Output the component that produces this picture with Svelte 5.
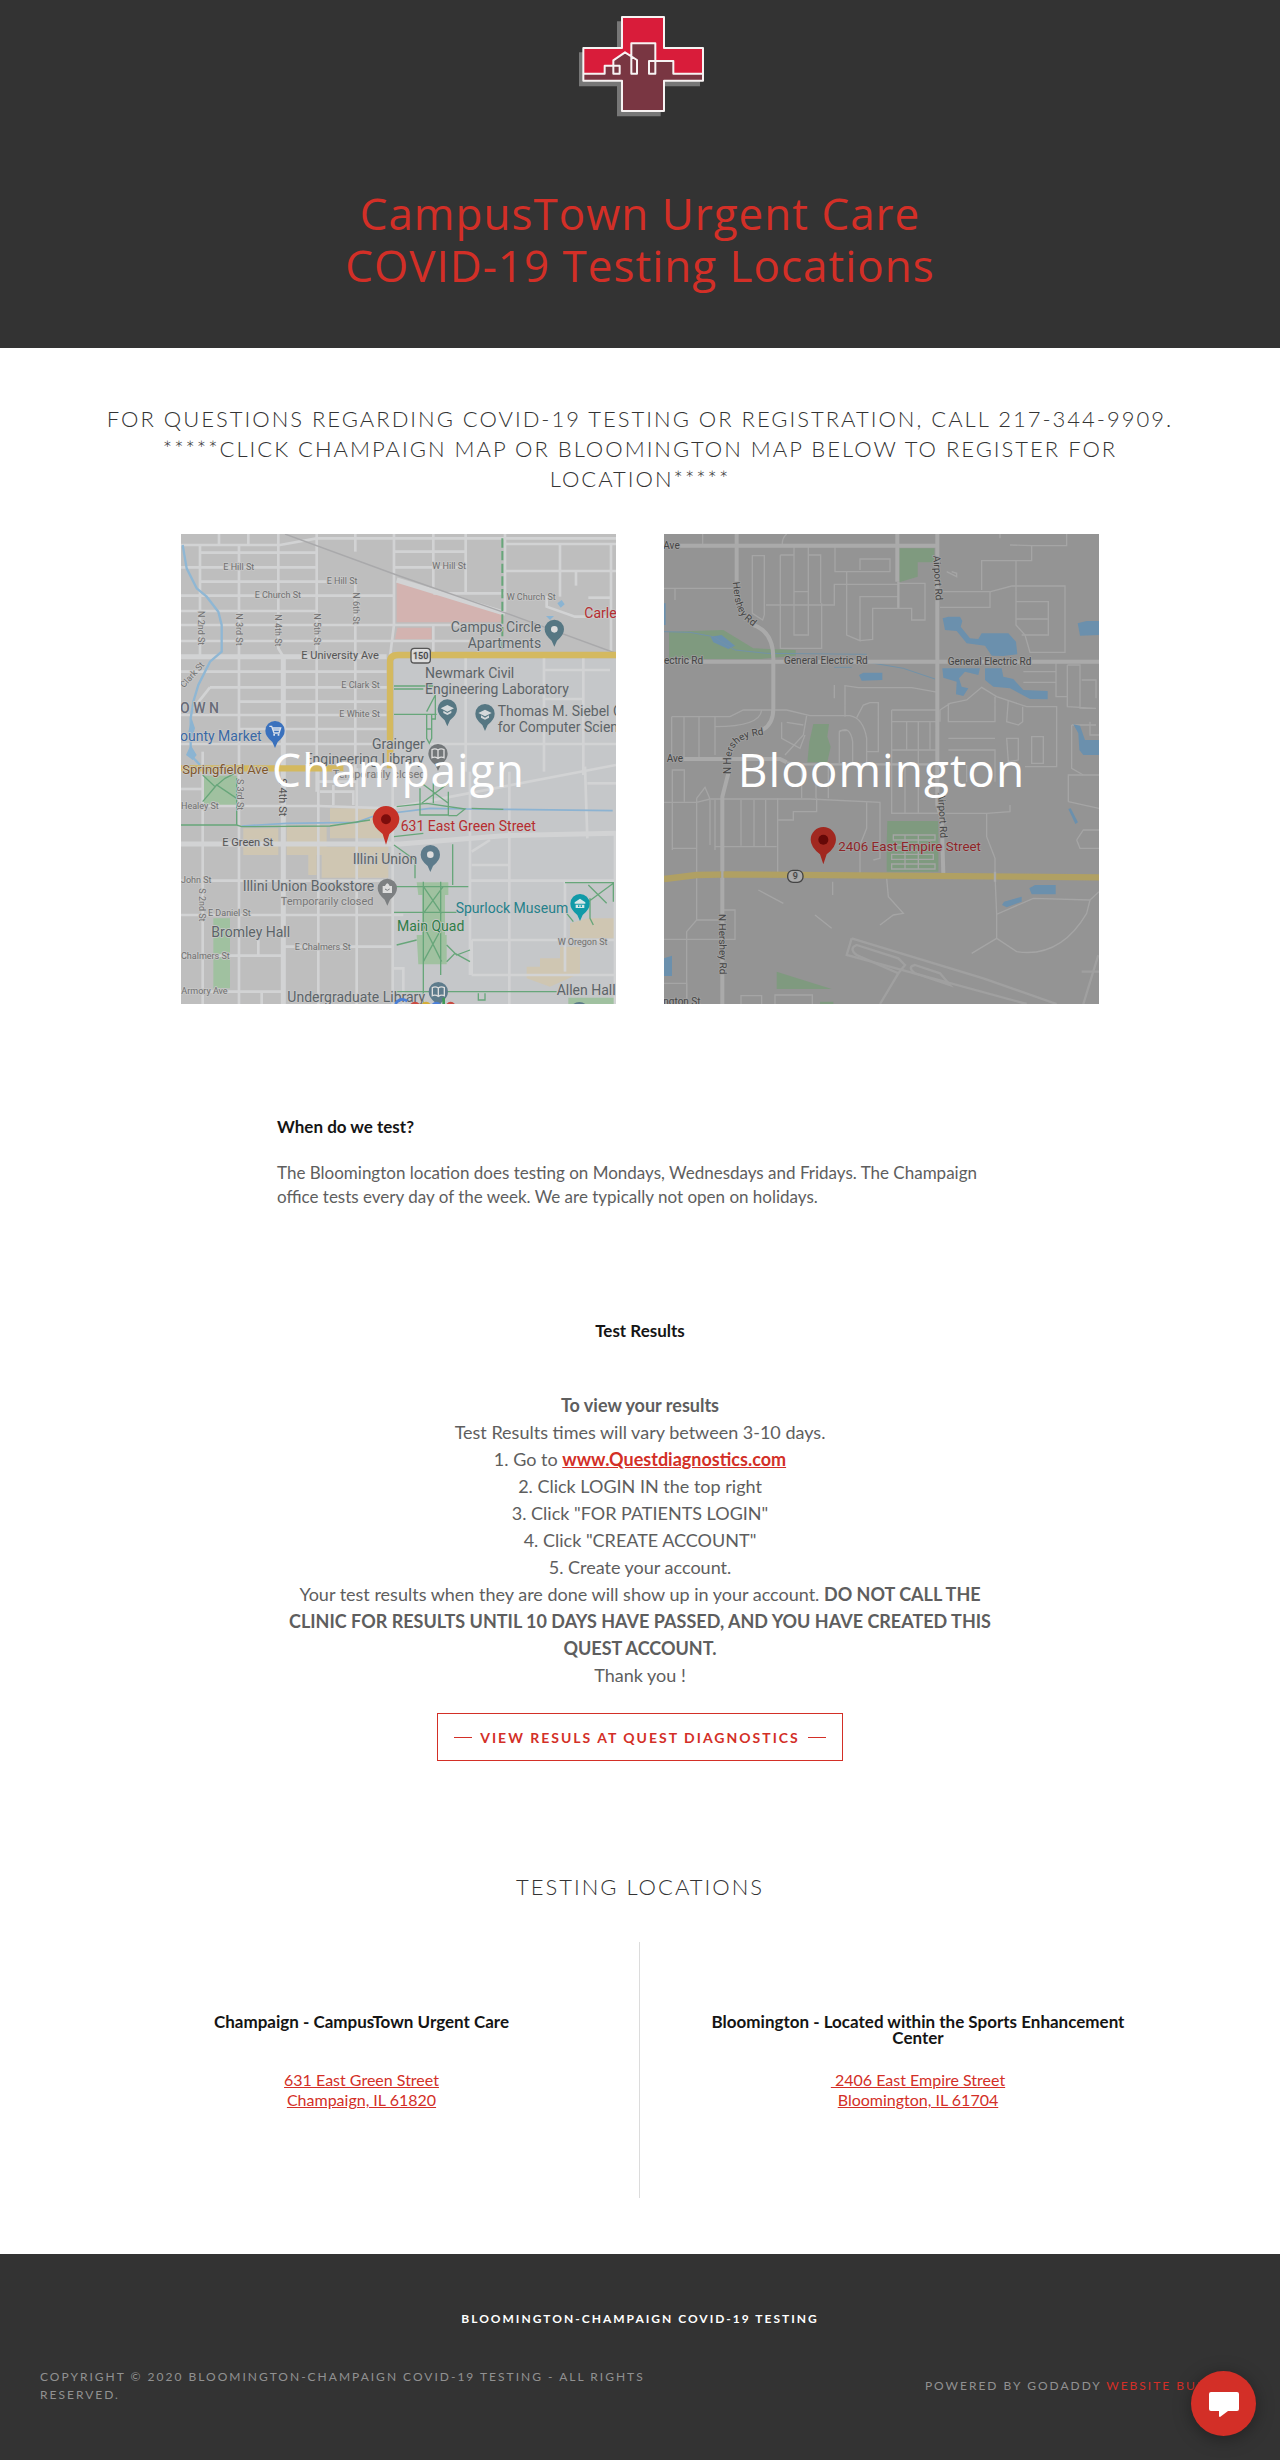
<script>
  const champaignRoads = [
    'M33 60H330L440 40H1338', 'M90 83H440', 'M672 80H887', 'M33 127H440', 'M672 127H887', 'M90 170H470', 'M33 212H672',
    'M790 205H1005', 'M33 258H440', 'M33 300H900', 'M33 348H900', 'M33 440H650', 'M120 487H650L660 487',
    'M70 550L120 487', 'M205 530H650', 'M33 570H650', 'M205 612H650', 'M33 657H650', 'M780 657H1338', 'M1122 435H1320',
    'M1122 522H1240', 'M1005 57H1338', 'M1005 138H1338', 'M1255 218H1323', 'M1130 212V245L1215 275H1323', 'M1218 140V182',
    'M90 60V400', 'M147 27V60', 'M235 27V60', 'M207 60V1437', 'M325 27V370L340 395', 'M440 27V800', 'M556 27V80', 'M556 160V760',
    'M672 27V300L660 395', 'M790 27V190', 'M790 300V390', 'M887 27V205', 'M1005 27V260', 'M1170 57V215', 'M1323 57V395',
    'M887 395V740', 'M1122 395V740', 'M1240 395V750', 'M33 792H98', 'M33 843H445L660 850L1338 720', 'M445 770H560', 'M450 800H550V840',
    'M490 780V840', 'M98 680V1437', 'M445 730V1437', 'M560 730V1437', 'M668 730V1437', 'M900 740V1350', 'M1018 740V1437',
    'M1245 725L1252 940', 'M1335 925V1437', 'M33 1067H668', 'M900 1067H1338', 'M33 1170H700', 'M340 1265H668', 'M33 1292H340',
    'M905 1245H1335', 'M905 1350H1338', 'M33 1400H340', 'M1185 1070V1340', 'M265 1240V1292', 'M275 1400V1437', 'M905 1020H1018',
    'M905 980L960 945', 'M1252 775H1338', 'M668 1330H700V1437', 'M905 1245V1350'
  ];
  const champaignWide = ['M33 395H650', 'M340 395V1437', 'M33 957H690L1000 932L1338 925', 'M680 165L1005 265'];
  const campusGreen = [
    'M672 483H790M672 492H760M672 568H800M770 560L796 510V582H785M770 570V640L778 655L785 640V570M770 612H785',
    'M33 900H200L215 905L480 903L600 885M200 760V900', 'M98 750L135 785L165 760L205 740M98 830L140 780L200 820',
    'M755 775L835 835M835 775L755 835M790 775V835M750 790V870H835V800',
    'M680 845L770 835L885 852L860 872H835M905 850L1000 853M672 935L760 925M672 960L735 1005V1060M848 958V1080',
    'M760 1084L815 1165M820 1084L760 1165M760 1200L815 1310M820 1200L760 1310M672 1085H895M672 1162H860M760 1070V1437M812 1070V1350',
    'M680 1260L740 1245M830 1310L855 1285L900 1310M830 1260L860 1290L900 1275', 'M672 1400H1160M925 1405V1425H945V1405',
    'M1185 1073H1330V1130M1255 1130L1330 1075M1255 1080L1310 1135M1260 1120V1180L1270 1200M1190 1165L1210 1190'
  ];
  const champaignLabels = [
    [160, 136, 'E Hill St'], [470, 178, 'E Hill St'], [787, 132, 'W Hill St'], [254, 220, 'E Church St'], [1010, 226, 'W Church St'],
    [514, 490, 'E Clark St'], [508, 577, 'E White St'], [33, 852, 'Healey St'], [33, 1074, 'John St'], [114, 1174, 'E Daniel St'],
    [374, 1275, 'E Chalmers St'], [33, 1301, 'Chalmers St'], [34, 1408, 'Armory Ave'], [1163, 1260, 'W Oregon St']
  ];
  const champaignVertical = [
    [83, 258, 'N 2nd St'], [199, 265, 'N 3rd St'], [316, 268, 'N 4th St'], [432, 265, 'N 5th St'], [548, 202, 'N 6th St'],
    [201, 762, 'S 3rd St'], [86, 1090, 'S 2nd St']
  ];
  const champaignPlaces = [
    [842, 320, 'Campus Circle'], [893, 368, 'Apartments'], [765, 459, 'Newmark Civil'], [765, 508, 'Engineering Laboratory'],
    [983, 573, 'Thomas M. Siebel C'], [983, 621, 'for Computer Scien'], [606, 672, 'Grainger'], [404, 718, 'Engineering Library'],
    [548, 1018, 'Illini Union'], [218, 1098, 'Illini Union Bookstore'], [124, 1235, 'Bromley Hall'], [352, 1431, 'Undergraduate Library'],
    [1160, 1411, 'Allen Hall']
  ];
  const pins = [
    [1153, 313, '#567783', 'dot'], [832, 552, '#567783', 'cap'], [945, 566, '#567783', 'cap'], [315, 617, '#3a71bd', 'cart'],
    [804, 686, '#737779', 'book'], [781, 989, '#5d7b8b', 'dot'], [652, 1090, '#7d8082', 'bag'], [1230, 1136, '#119aa8', 'museum'],
    [805, 1400, '#5d7b8b', 'book'], [1228, 1460, '#5d7b8b', 'dot']
  ];
  const bloomRoads = [
    'M42 190H258', 'M75 190V225', 'M158 27V58', 'M397 62Q395 40 410 27', 'M307 92H343V270L338 285L307 265Z', 'M432 62V330H475V65',
    'M391 90H432M475 90H512V235M391 90V370H515V235', 'M348 240H553V178H745M432 200H475', 'M555 65V140H720V102H630V135',
    'M590 140V330L630 347V215H745V248M630 347L668 343V250H785V285H825V175H745', 'M870 200H1022L1085 183H1245V382H1140L1125 330L1098 300V105',
    'M870 247H1020V200M995 195V107H1145V62M1050 40V27M1080 60L1145 62H1250V27M1098 230H1195V330H1115M1098 282H1195M890 140L920 155V145L905 140',
    'M65 575H240L280 555H410L480 572H600Q640 580 650 640V720M65 575V700M102 575V700M147 575V700M195 575V690',
    'M195 605Q330 605 335 555M470 572L460 630L405 690M410 592L460 600M395 592V640L450 670L465 630',
    'M585 575V482L625 488H785L865 502M553 480V520M620 578L640 540L660 533H685V680H650',
    'M725 555H865V865H725V555M725 590H865M770 590V675M805 590V865M840 590V675M725 675H865M765 715V865',
    'M870 590V555L900 535L950 525L995 487L1040 515L1130 545H1220V725H1125M895 535V590H1035V515M895 640H1035M895 675H1035V770M950 720V770',
    'M1075 525L1070 590L1105 600L1118 590V545M1070 640H1105V705L1075 710ZM1145 635H1180V715H1145ZM1218 410V515H1252M1120 440H1218M1120 472H1218',
    'M1252 420H1290V550H1338M1252 420V545L1338 550M1295 465H1338V520M1265 600V730L1300 750M1265 600H1338M1320 590V630H1347',
    'M568 715V620Q600 600 608 650V715M568 617H590M455 715V820M535 720V820M498 745V820',
    'M42 832H140L180 822H480L690 832V1000L670 1005M140 820L165 787L180 822M140 820V1185L110 1220V1437',
    'M67 975V735H103V830M67 970H140M180 825V960M195 825V975M273 825V962M312 825V965M347 825V965M195 965H380M383 1045V820M383 885H430V860H500V820M650 832V910L630 960V1045',
    'M725 865H1010V935L1035 1000V1045M1010 865L1080 860V840M42 1243H255V1155H220M140 1185H215M42 1375H110V1437',
    'M1035 1050L1040 1168L1150 1120L1320 1125L1347 1100M1040 1168V1240L1100 1280Q1230 1300 1310 1165L1320 1125M1040 1240L965 1285',
    'M1255 830L1347 850M1255 830V750H1347M1280 945L1300 915H1347M1280 945L1290 970H1347M710 1060L715 1115L760 1165L730 1170L690 1200',
    'M495 1170L545 1210M273 1437V1412H335V1437M375 1437V1410H487V1437M548 1070V1110M325 1095L400 1135'
  ];
  const ponds = [
    'M878 280L895 275H930L937 288L932 305L960 340L985 342L995 325H1075L1098 350L1102 388L1060 393L1025 392L1005 362L950 355L920 318L885 315Z',
    'M877 430H990L985 450L945 440L927 460L935 485L955 490L940 513L918 508L920 470L880 458Z',
    'M1005 430H1055L1060 455L1090 462L1120 495L1193 498V523L1140 522L1080 490L1030 485L1005 465Z',
    'M1283 295L1310 288H1347V330L1290 332Z', 'M627 450L640 443H697V465L635 467Z', 'M182 335L215 330L255 362L235 372L190 352Z',
    'M1270 598L1290 602L1305 645H1347V690H1300L1288 675L1285 625Z', 'M1138 1090L1155 1080H1217V1108H1145Z',
    'M1056 1140L1062 1130L1115 1115V1130L1070 1147Z', 'M42 1300L66 1292V1353H42Z', 'M42 235H47V300H42Z', 'M1255 852L1262 850L1284 892L1276 897Z'
  ];
  const bloomLabels = [
    [40, 72, 'Ave'], [42, 418, 'ectric Rd'], [402, 418, 'General Electric Rd'], [893, 420, 'General Electric Rd'], [50, 710, 'Ave'],
    [40, 1441, 'ngton St']
  ];
  const locations = [
    { name: 'Champaign - CampusTown Urgent Care', lines: ['631 East Green Street', 'Champaign, IL 61820'] },
    { name: 'Bloomington - Located within the Sports Enhancement Center', lines: ['\u00a02406 East Empire Street', 'Bloomington, IL 61704'] }
  ];
</script>

<header>
  <svg class="logo" viewBox="45 45 390 306" role="img" aria-label="CampusTown Urgent Care">
    <path fill="#777" d="M57 157H171V64H304V157H420V259H302V349H171V259H57Z" />
    <path fill="#d91c3a" d="M70 144H186V51H312V144H429V221H340V183H286V130H214V180L195 157L160 180V197H133V221H70Z" />
    <path fill="#793642" d="M70 221H133V197H160V180L195 157L214 170V130H286V183H340V221H429V242H312V333H186V242H70Z" />
    <path class="outline" d="M70 144H186V51H312V144H429V242H312V333H186V242H70Z" />
    <path class="outline" d="M70 221H134V197H179V221H160V181L195 157L231 180V221H214V130H286V221H267V183H340V221H429" />
  </svg>
  <h1>CampusTown Urgent Care<br />COVID-19 Testing Locations</h1>
</header>

<main>
  <section class="intro">
    <h2>For questions regarding COVID-19 testing or registration, call 217-344-9909.<br />*****Click Champaign map or Bloomington map below to register for location*****</h2>
    <div class="maps">
      <a class="map" href="#champaign">
        <svg viewBox="33 27 1305 1410" preserveAspectRatio="xMidYMid slice" aria-hidden="true">
          <path fill="#bebebe" d="M33 27H1338V1437H33Z" />
          <path fill="#c5c7c9" d="M672 400H1338V730H672ZM560 730H1338V1437H668V1060H560Z" />
          <path fill="#cfc6b2" d="M480 850H655V940H480ZM455 965H655V1058H455ZM220 910H325V990H220ZM350 905H470V990H440V1050H415V990H350ZM1255 1180H1335V1240H1200V1195ZM1070 1325H1110V1300H1170V1265H1230V1345L1140 1385L1070 1360Z" />
          <path fill="#d3b3b0" d="M680 170L1000 270V292H680ZM682 308H785V343H675Z" />
          <path fill="#a0c1a0" d="M98 752H200V840H98ZM130 1180H180V1390H130ZM740 1072H835V1110H745ZM757 1110H825V1230H757ZM740 1230H830V1318H745ZM1195 1418H1338V1437H1195Z" />
          <g class="road">{#each champaignRoads as d}<path {d} />{/each}</g>
          <g class="road wide">{#each champaignWide as d}<path {d} />{/each}</g>
          <path class="rail" d="M345 27L680 150L1010 265L1338 385" />
          <path class="stream" d="M38 60L50 130L80 190L110 215L145 260L155 300V380L120 410L85 480L70 530L62 580V690L90 720" />
          <path class="creek" d="M215 903L350 895L560 892L620 870L780 850L885 852L1000 853L1328 857" />
          <path fill="#8bb4d2" d="M48 690L62 660L80 690L68 705ZM55 620L65 580L75 610L66 640ZM1162 235L1175 225L1184 238L1172 248ZM1128 273H1152L1140 285Z" />
          <g class="campus">{#each campusGreen as d}<path {d} />{/each}</g>
          <path class="campus dashed" d="M997 40V380" />
          <path class="highway" d="M660 657V410Q660 390 685 390H1338M660 657V730M33 730H520" />
          <rect x="723" y="370" width="58" height="44" rx="10" fill="#ddd" stroke="#555" stroke-width="4" />
          <text class="shield" x="752" y="403">150</text>
          <g class="street">
            {#each champaignLabels as [x, y, t]}<text {x} {y}>{t}</text>{/each}
            {#each champaignVertical as [x, y, t]}<text transform="translate({x} {y}) rotate(90)">{t}</text>{/each}
            <text transform="translate(42 490) rotate(-48)">Clark St</text>
          </g>
          <g class="street major">
            <text x="394" y="403">E University Ave</text>
            <text x="157" y="962">E Green St</text>
            <text transform="translate(328 760) rotate(90)">S 4th St</text>
          </g>
          <g class="place">
            {#each champaignPlaces as [x, y, t]}<text {x} {y}>{t}</text>{/each}
            <text class="brown" x="37" y="746">Springfield Ave</text>
            <text class="blue" x="30" y="648">ounty Market</text>
            <text class="teal" x="857" y="1164">Spurlock Museum</text>
            <text class="green" x="681" y="1219">Main Quad</text>
            <text class="red" x="1243" y="279">Carle</text>
            <text class="red" x="692" y="917">631 East Green Street</text>
            <text class="small" x="332" y="1139">Temporarily closed</text>
            <text class="small" x="488" y="759">Temporarily closed</text>
            <text class="town" x="30" y="563">O W N</text>
          </g>
          {#each pins as [x, y, color, kind]}
            <g transform="translate({x} {y})">
              <path fill={color} d="M0 52L-8 34Q-29 17-29 0A29 29 0 1 1 29 0Q29 17 8 34Z" />
              {#if kind === 'dot'}<circle r="10" fill="#ddd" />
              {:else if kind === 'cap'}<path fill="#d5d9db" d="M0-12L20-2L0 8L-20-2ZM-12 5L0 12L12 5V12L0 18L-12 12Z" />
              {:else if kind === 'cart'}<path fill="none" stroke="#dde3ec" stroke-width="4" d="M-17-13H-10L-3 7H12L17-8H-7M-6-2H14" /><path fill="#dde3ec" d="M-5 10H0V15H-5ZM8 10H13V15H8Z" />
              {:else if kind === 'book'}<path fill="none" stroke="#ddd" stroke-width="4" d="M0-11Q-9-17-18-12V12Q-9 8 0 14Q9 8 18 12V-12Q9-17 0-11V14" />
              {:else if kind === 'bag'}<path fill="#ddd" d="M-14-7H-7Q0-23 7-7H14V14H-14Z" /><path fill="none" stroke={color} stroke-width="3" d="M-7 2Q0 10 7 2" />
              {:else}<path fill="#d8e8e8" d="M-16-4L0-15L16-4V0H-16ZM-13 3H13V13H-13Z" /><path fill={color} d="M-6 5H-2V10H-6ZM2 5H6V10H2Z" />{/if}
            </g>
          {/each}
          <g transform="translate(648 883)">
            <path fill="#c53127" d="M0 76L-10 44Q-40 22-40 0A40 40 0 1 1 40 0Q40 22 10 44Z" />
            <circle r="15" fill="#7c0d0c" />
          </g>
          <g fill="none" stroke-width="8">
            <path stroke="#4b7fd6" d="M712 1428Q690 1415 676 1437" />
            <path stroke="#c94b42" d="M724 1440Q735 1428 746 1440" />
            <path stroke="#d6ad35" d="M757 1440Q768 1428 779 1440" />
            <path stroke="#4b7fd6" d="M788 1440Q799 1428 810 1440" />
            <path stroke="#3e9956" d="M821 1418V1440" />
            <path stroke="#c94b42" d="M832 1440Q842 1428 852 1440" />
          </g>
        </svg>
        <span>Champaign</span>
      </a>
      <a class="map" href="#bloomington">
        <svg class="dim" viewBox="42 27 1305 1410" preserveAspectRatio="xMidYMid slice" aria-hidden="true">
          <defs>
            <path id="hershey-north" d="M248 172L254 220Q262 262 284 284L330 322" />
            <path id="hershey-bend" d="M243 747V700Q248 650 300 636L350 627" />
          </defs>
          <path fill="#949494" d="M42 27H1347V1437H42Z" />
          <path fill="#7f9a7f" d="M748 70H853V112H803V155L748 172ZM57 320L220 315L310 370L437 375V392L330 402H57ZM490 597H537L532 635L542 665L532 712H472L478 650ZM712 888H865V1040H710V960ZM380 1340L545 1392H380ZM510 1430H550V1437H510Z" />
          <g class="road fine">{#each bloomRoads as d}<path {d} />{/each}</g>
          <g class="road runway">
            <path d="M605 1240L590 1290L1130 1437M605 1240L1000 1360L1220 1437M1300 1437L1345 1290M1295 1340H1347" />
            <path d="M620 1260L745 1300L765 1320L745 1345L620 1290Q595 1270 620 1260ZM795 1320L870 1345L900 1380L795 1345Q770 1325 795 1320ZM745 1345L690 1437" />
          </g>
          <path class="road fine" d="M730 930H855V945H730ZM725 960H850V975H725ZM725 988H850V1003H725ZM725 1017H855V1032H725ZM765 930V1030M805 930V1030" />
          <g fill="#6b90ad">{#each ponds as d}<path {d} />{/each}</g>
          <path class="creek" d="M42 320L120 322L190 335L255 375L350 385L650 388M655 412L760 430L855 462M552 427H605" />
          <g class="road wide">
            <path d="M82 62H865M260 27V170M310 300Q370 320 370 400V550Q370 610 320 620M235 745L217 815V1437M42 410H1347M862 27V840L875 880L880 1045M100 702H390L410 712M742 27V170" />
          </g>
          <path class="road" d="M410 712L450 718H865M745 170V248" />
          <path class="highway" d="M42 1062L140 1050L240 1048L1347 1057" />
          <path class="road" d="M217 1038V1065M1035 1040V1070" />
          <rect x="413" y="1036" width="46" height="36" rx="16" fill="#aaa" stroke="#444" stroke-width="4" />
          <text class="shield" x="436" y="1063">9</text>
          <g class="street major">
            {#each bloomLabels as [x, y, t]}<text {x} {y}>{t}</text>{/each}
            <text transform="translate(850 92) rotate(87)">Airport Rd</text>
            <text transform="translate(864 805) rotate(87)">Airport Rd</text>
            <text transform="translate(206 1167) rotate(89)">N Hershey Rd</text>
            <text><textPath href="#hershey-north">Hershey Rd</textPath></text>
            <text><textPath href="#hershey-bend">N Hershey Rd</textPath></text>
          </g>
          <g class="place"><text class="red" x="565" y="978">2406 East Empire Street</text></g>
          <g transform="translate(520 944)">
            <path fill="#a12820" d="M0 74L-10 44Q-38 22-38 0A38 38 0 1 1 38 0Q38 22 10 44Z" />
            <circle r="15" fill="#650807" />
          </g>
        </svg>
        <span>Bloomington</span>
      </a>
    </div>
  </section>

  <section class="faq">
    <h4>When do we test?</h4>
    <p>The Bloomington location does testing on Mondays, Wednesdays and Fridays. The Champaign office tests every day of the week. We are typically not open on holidays.</p>
  </section>

  <section class="results">
    <h4>Test Results</h4>
    <div class="steps">
      <strong>To view your results</strong><br />
      Test Results times will vary between 3-10 days.<br />
      1. Go to <a href="#quest"><strong>www.Questdiagnostics.com</strong></a><br />
      2. Click LOGIN IN the top right<br />
      3. Click "FOR PATIENTS LOGIN"<br />
      4. Click "CREATE ACCOUNT"<br />
      5. Create your account.<br />
      Your test results when they are done will show up in your account. <strong>DO NOT CALL THE CLINIC FOR RESULTS UNTIL 10 DAYS HAVE PASSED, AND YOU HAVE CREATED THIS QUEST ACCOUNT.</strong><br />
      Thank you !
    </div>
    <a class="cta" href="#quest">View Resuls at Quest Diagnostics</a>
  </section>

  <section class="places">
    <h2>Testing Locations</h2>
    <div class="columns">
      {#each locations as place}
        <div class="location">
          <h4>{place.name}</h4>
          <a href="#directions">{place.lines[0]}<br />{place.lines[1]}</a>
        </div>
      {/each}
    </div>
  </section>
</main>

<footer>
  <strong>Bloomington-Champaign COVID-19 Testing</strong>
  <div class="legal">
    <p>Copyright © 2020 Bloomington-Champaign COVID-19 Testing - All Rights Reserved.</p>
    <p class="powered">Powered by GoDaddy <a href="#builder">Website Builder</a></p>
  </div>
</footer>

<button class="chat" type="button" aria-label="Open chat">
  <svg viewBox="0 0 30 26" aria-hidden="true"><path fill="#fff" d="M2 0H28Q30 0 30 2V17Q30 19 28 19H19L11 25Q10 25 10 24V19H2Q0 19 0 17V2Q0 0 2 0Z" /></svg>
</button>

<style>
  :global(body) { margin: 0; background: #fff; color: #5e5e5e; font-family: Lato, "Open Sans", sans-serif; font-size: 16px; }
  h1, h2, h4, p { margin: 0; }
  a { color: #d32f27; }

  header { display: flex; flex-direction: column; align-items: center; gap: 70px; padding: 15px 24px 57px; background: #333; }
  .logo { width: 130px; height: 102px; }
  .outline { fill: none; stroke: #f7f3f3; stroke-width: 6; stroke-linejoin: round; }
  h1 { color: #d32f27; font: 400 44px/52px "Open Sans", sans-serif; letter-spacing: 1px; text-align: center; }

  h2 { color: #333; font-size: 22px; font-weight: 300; line-height: 30px; letter-spacing: 2px; text-align: center; text-transform: uppercase; }
  h4 { color: #151515; font-size: 17px; font-weight: 700; line-height: 16px; }

  .intro { max-width: 1104px; margin: 0 auto; padding: 56px 24px 0; }
  .maps { display: grid; grid-template-columns: 1fr 1fr; gap: 48px; max-width: 918px; margin: 40px auto 0; }
  .map { display: grid; height: 470px; overflow: hidden; text-decoration: none; }
  .map > * { grid-area: 1 / 1; }
  .map svg { width: 100%; height: 470px; }
  .map span { place-self: center; color: #fff; font: 400 46px/56px "Open Sans", sans-serif; letter-spacing: 1px; }

  .road { fill: none; stroke: #d2d3d4; stroke-width: 8; }
  .wide { stroke-width: 15; }
  .dim .road { stroke: #a9a9a9; stroke-width: 7; }
  .dim .fine { stroke: #a5a5a5; stroke-width: 4; }
  .dim .runway { stroke: #a0a0a0; stroke-width: 7; }
  .dim .wide { stroke: #aaa; stroke-width: 12; }
  .rail { fill: none; stroke: #a9a9ab; stroke-width: 4; }
  .stream { fill: none; stroke: #8fb7d4; stroke-width: 7; }
  .creek { fill: none; stroke: #8cb3d2; stroke-width: 5; }
  .dim .creek { stroke: #7292a8; stroke-width: 3; }
  .campus { fill: none; stroke: #67a67a; stroke-width: 4; }
  .dashed { stroke-width: 6; stroke-dasharray: 28 10; }
  .highway { fill: none; stroke: #d4b95f; stroke-width: 19; }
  .dim .highway { stroke: #b0a063; }
  .map text { font-family: Roboto, sans-serif; paint-order: stroke; stroke: #c8c8c8; stroke-width: 5; stroke-linejoin: round; }
  .map .dim text { stroke: #a0a0a0; }
  .street text { fill: #707070; font-size: 27px; }
  .major text { fill: #555; font-size: 33px; }
  .dim .major text { fill: #444; font-size: 30px; }
  .place text { fill: #5c6468; font-size: 42px; }
  .place .small { fill: #777; font-size: 33px; }
  .place .town { fill: #686c78; font-size: 42px; font-weight: 500; }
  .place .brown { fill: #80572d; font-size: 39px; }
  .place .blue { fill: #3a68a5; }
  .place .teal { fill: #25818c; }
  .place .green { fill: #2f7d48; }
  .place .red { fill: #b52d30; }
  .dim .place .red { fill: #8f2528; font-size: 40px; }
  .shield { fill: #444; font-size: 27px; font-weight: 500; text-anchor: middle; }

  .faq { max-width: 726px; margin: 0 auto; padding: 115px 24px 0; }
  .faq p { margin-top: 26px; font-size: 17px; line-height: 24px; }

  .results { display: flex; flex-direction: column; align-items: center; max-width: 726px; margin: 0 auto; padding: 114px 24px 0; text-align: center; }
  .steps { margin-top: 53px; font-size: 18px; line-height: 27px; }
  .cta { display: flex; align-items: center; gap: 8px; box-sizing: border-box; min-height: 48px; margin-top: 24px; padding: 0 16px; border: 1px solid; font-size: 14px; font-weight: 700; letter-spacing: 2px; text-decoration: none; text-transform: uppercase; }
  .cta::before, .cta::after { content: ""; width: 18px; border-top: 1px solid; }

  .places { max-width: 1112px; margin: 0 auto; padding: 111px 24px 56px; }
  .columns { display: grid; grid-template-columns: 1fr 1fr; margin-top: 40px; }
  .location { display: flex; flex-direction: column; align-items: center; gap: 24px; padding: 72px 48px 88px; line-height: 20px; text-align: center; }
  .location:first-child { border-right: 1px solid #dcdcdc; }
  .location h4 { min-height: 32px; }

  footer { padding: 56px 40px; background: #333; color: #919191; font-size: 12px; line-height: 18px; letter-spacing: 2px; text-align: center; text-transform: uppercase; }
  footer strong { color: #fff; }
  .legal { display: flex; align-items: center; justify-content: space-between; margin-top: 40px; text-align: left; }
  .legal p:first-child { max-width: 620px; }
  .legal a { text-decoration: none; }
  .powered { text-align: right; }

  .chat { position: fixed; right: 24px; bottom: 24px; display: grid; place-items: center; width: 65px; height: 65px; padding: 3px 0 0; border: 0; border-radius: 50%; background: #d32f27; box-shadow: 0 3px 18px rgba(0, 0, 0, 0.35); cursor: pointer; }
  .chat svg { width: 30px; height: 26px; }
</style>
